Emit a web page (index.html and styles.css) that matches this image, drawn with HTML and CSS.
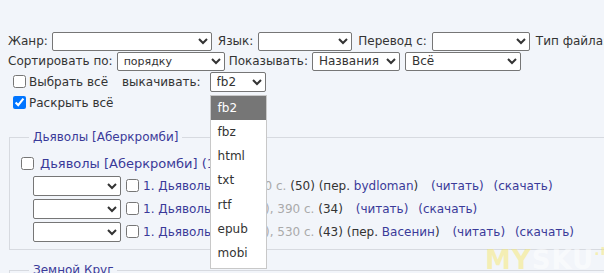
FILE: index.html
```html
<!DOCTYPE html>
<html>
<head>
<meta charset="utf-8">
<link rel="stylesheet" href="styles.css">
</head>
<body>
<div class="page">
  <div class="filters">
    <div class="row">
      <span>Жанр:</span><select class="sel s-genre"><option></option></select>
      <span class="lbl">Язык:</span><select class="sel s-lang"><option></option></select>
      <span class="lbl">Перевод с:</span><select class="sel s-tr"><option></option></select>
      <span class="lbl">Тип файла:</span>
    </div>
    <div class="row row-2">
      <span>Сортировать по:</span><select class="sel small s-sort"><option>порядку</option></select>
      <span class="lbl">Показывать:</span><select class="sel s-show"><option>Названия</option></select>
      <select class="sel s-all"><option>Всё</option></select>
    </div>
    <div class="row row-check">
      <label class="chk"><input type="checkbox"> Выбрать всё</label>
      <span class="dl-label">выкачивать:</span>
      <span class="dl-wrap">
        <select class="sel s-fmt"><option>fb2</option></select>
        <div class="dropdown">
          <div class="opt active">fb2</div>
          <div class="opt">fbz</div>
          <div class="opt">html</div>
          <div class="opt">txt</div>
          <div class="opt">rtf</div>
          <div class="opt">epub</div>
          <div class="opt">mobi</div>
        </div>
      </span>
    </div>
    <div class="row row-check">
      <label class="chk"><input type="checkbox" checked> Раскрыть всё</label>
    </div>
  </div>

  <fieldset class="series">
    <legend><a href="#">Дьяволы [Аберкромби]</a></legend>
    <div class="series-head">
      <input type="checkbox">
      <span class="title"><a href="#">Дьяволы [Аберкромби]</a> <a href="#">(1 книга)</a></span>
    </div>
    <div class="book">
      <select class="sel s-book"><option></option></select>
      <input type="checkbox">
      <span class="info"><a href="#">1. Дьяволы</a> <span class="muted">(Т1), 480 с.</span> (50) (пер. <a href="#">bydloman</a>) <a class="act" href="#">(читать)</a> <a class="act act-2" href="#">(скачать)</a></span>
    </div>
    <div class="book">
      <select class="sel s-book"><option></option></select>
      <input type="checkbox">
      <span class="info"><a href="#">1. Дьяволы</a> <span class="muted">(Том 1й), 390 с.</span> (34) <a class="act" href="#">(читать)</a> <a class="act act-2" href="#">(скачать)</a></span>
    </div>
    <div class="book">
      <select class="sel s-book"><option></option></select>
      <input type="checkbox">
      <span class="info"><a href="#">1. Дьяволы</a> <span class="muted">(Том 1й), 530 с.</span> (43) (пер. <a href="#">Васенин</a>) <a class="act" href="#">(читать)</a> <a class="act act-2" href="#">(скачать)</a></span>
    </div>
  </fieldset>

  <fieldset class="series series-next">
    <legend><a href="#">Земной Круг</a></legend>
  </fieldset>
</div>
<div class="watermark"><span class="y">MY</span><span class="w">SKU</span><span class="y ru">.ru</span></div>
</body>
</html>
```

FILE: styles.css
```css
html, body {
  margin: 0;
  padding: 0;
  background: #f2f5fa;
  overflow: hidden;
}
body {
  font-family: "DejaVu Sans", Verdana, sans-serif;
  font-size: 12px;
  color: #333;
}
a {
  color: #3a3a99;
  text-decoration: none;
}
.page {
  padding: 31px 0 0 8px;
  width: 700px;
}
.row {
  white-space: nowrap;
  height: 20px;
  display: flex;
  align-items: center;
}
.row .sel { margin-left: 4px; }
.row .lbl { margin-left: 6px; }
.row .lbl + .sel { margin-left: 5px; }
.row-2 .lbl { margin-left: 4px; }
.row-2 .lbl + .sel { margin-left: 4px; }
.sel {
  height: 19px;
  border: 1px solid #767676;
  border-radius: 2px;
  background: #fff;
  font-family: "DejaVu Sans", Verdana, sans-serif;
  font-size: 12px;
  color: #333;
  padding: 0 2px;
  margin: 0;
}
.small { font-size: 11px; }
.s-genre { width: 160px; }
.s-lang { width: 94px; }
.s-tr { width: 98px; }
.s-sort { width: 108px; }
.s-show { width: 88px; }
.row .s-all { width: 116px; margin-left: 5px; }
.row .s-fmt { width: 56px; height: 20px; margin-left: 0; }
.row-check { height: 21px; }
.chk {
  display: flex;
  align-items: center;
  margin-left: 4px;
}
.chk input { margin: 0 3px 0 1px; }
.dl-label { margin-left: 14px; margin-right: 9px; }
.dl-wrap { position: relative; display: inline-flex; }
.dropdown {
  position: absolute;
  left: 0;
  top: 23px;
  width: 55px;
  background: #fff;
  border: 1px solid #c8c8c8;
  z-index: 5;
  padding-bottom: 2px;
}
.opt {
  height: 24.3px;
  line-height: 24px;
  padding-left: 7px;
  color: #333;
}
.opt.active {
  background: #767676;
  color: #fff;
}
.series {
  margin: 17px 0 0 1px;
  border: 1px solid #d7dae0;
  border-right: none;
  padding: 0 0 6px 10px;
  min-inline-size: 0;
}
.series legend {
  padding: 0 4px;
  margin-left: 9px;
}
.series-head {
  display: flex;
  align-items: center;
  height: 22px;
  margin-top: 8px;
}
.series-head input { margin: 0 6px 0 1px; }
.series-head .title { font-size: 13px; white-space: nowrap; }
.book {
  display: flex;
  align-items: center;
  white-space: nowrap;
  height: 23px;
  padding-left: 13px;
}
.book .s-book { width: 88px; height: 20px; margin-right: 4px; }
.book input { margin: 0 4px 0 1px; }
.muted { color: #aaa; }
.act { margin-left: 9px; }
.act-2 { margin-left: 6px; }
.series-next { margin-top: 13px; }
.watermark {
  position: absolute;
  left: 485px;
  top: 242px;
  font-family: "DejaVu Sans", sans-serif;
  font-weight: bold;
  font-size: 26px;
  letter-spacing: 1px;
}
.watermark .y { color: rgba(246, 232, 110, 0.5); }
.watermark .w { color: rgba(255, 255, 255, 0.55); }
.watermark .ru { font-size: 14px; vertical-align: 14px; }
```
